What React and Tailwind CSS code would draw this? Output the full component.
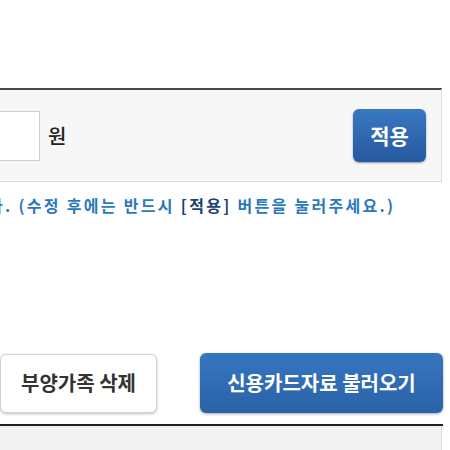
import React from 'react';

const font = { fontFamily: '"Noto Sans CJK KR", "Noto Sans", sans-serif' };

export default function App() {
    return (
        <div className="w-[450px] h-[450px] bg-white overflow-hidden flex flex-col pt-[88px]" style={font}>
            {/* ── Amount panel ── */}
            <div className="w-[442px] h-[94px] shrink-0 bg-[#f7f7f7] border-t-2 border-t-[#4a4a4a] border-r border-b border-[#dcdcdc] flex items-center justify-between pr-[15px]">
                <div className="flex items-center">
                    <div className="w-[100px] h-[50px] ml-[-60px] bg-white border border-[#cfcfcf]" />
                    <span className="ml-[8px] text-[20px] font-medium text-[#222]">원</span>
                </div>
                <button className="w-[73px] h-[53px] rounded-[6px] bg-gradient-to-b from-[#3a78c2] to-[#2559a0] shadow-[0_1px_2px_rgba(0,0,0,0.4)] text-white text-[21px] font-bold">
                    적용
                </button>
            </div>

            {/* ── Notice ── */}
            <p className="mt-[13px] ml-[-29px] whitespace-nowrap text-[16px] leading-[20px] tracking-[2.3px] font-bold text-[#2b78bd]">
                니다. (수정 후에는 반드시 <span className="text-[#1d3f6e]">[적용]</span> 버튼을 눌러주세요.)
            </p>

            {/* ── Actions ── */}
            <div className="mt-[138px] w-[443px] flex items-center justify-between">
                <button className="w-[157px] h-[59px] rounded-[6px] bg-white border border-[#d2d2d2] shadow-[0_1px_3px_rgba(0,0,0,0.25)] text-[20px] font-bold text-[#333]">
                    부양가족 삭제
                </button>
                <button className="w-[243px] h-[60px] rounded-[6px] bg-gradient-to-b from-[#3676c0] to-[#2a62a8] shadow-[0_1px_3px_rgba(0,0,0,0.35)] text-[20px] font-bold text-white">
                    신용카드자료 불러오기
                </button>
            </div>

            {/* ── Table head ── */}
            <div className="mt-[11px] w-[443px] h-[2px] bg-[#222]" />
            <div className="w-[442px] flex-1 bg-[#f3f3f3] border-r border-[#dedede]" />
        </div>
    );
}
